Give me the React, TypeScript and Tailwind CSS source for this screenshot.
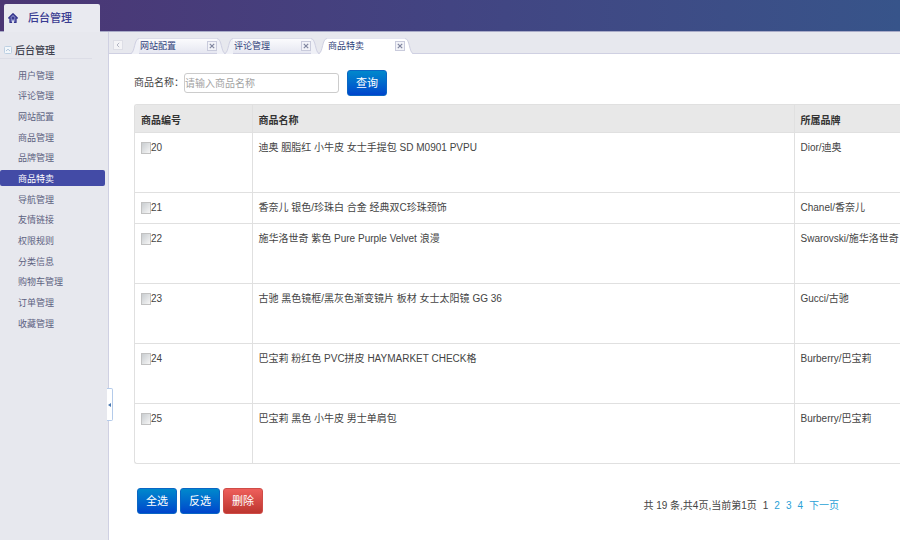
import { useState } from "react";

const menu = [
  "用户管理",
  "评论管理",
  "网站配置",
  "商品管理",
  "品牌管理",
  "商品特卖",
  "导航管理",
  "友情链接",
  "权限规则",
  "分类信息",
  "购物车管理",
  "订单管理",
  "收藏管理",
];

const tabs = ["网站配置", "评论管理", "商品特卖"];

const products = [
  { id: 20, name: "迪奥 胭脂红 小牛皮 女士手提包 SD M0901 PVPU", brand: "Dior/迪奥" },
  { id: 21, name: "香奈儿 银色/珍珠白 合金 经典双C珍珠颈饰", brand: "Chanel/香奈儿", short: true },
  { id: 22, name: "施华洛世奇 紫色 Pure Purple Velvet 浪漫", brand: "Swarovski/施华洛世奇" },
  { id: 23, name: "古驰 黑色镜框/黑灰色渐变镜片 板材 女士太阳镜 GG 36", brand: "Gucci/古驰" },
  { id: 24, name: "巴宝莉 粉红色 PVC拼皮 HAYMARKET CHECK格", brand: "Burberry/巴宝莉" },
  { id: 25, name: "巴宝莉 黑色 小牛皮 男士单肩包", brand: "Burberry/巴宝莉" },
];

const blueButton =
  "h-[26px] w-10 rounded-[3px] border border-[#0a66c4] bg-linear-to-b from-[#0088cc] to-[#0044cc] text-[11px] text-white";

function HomeIcon() {
  return (
    <svg viewBox="0 0 10 11" className="h-[11px] w-[10px]" fill="none">
      <path d="M5 0.8 9.3 5H8V9.4H2V5H0.7Z" fill="#7d80c2" stroke="#34348c" strokeWidth="1.3" strokeLinejoin="round" />
      <path d="M5 3.4 6.6 5.1 5 6.8 3.4 5.1Z" fill="#34348c" />
      <path d="M4.1 7.6H5.9V10.1H4.1Z" fill="#e9eaf2" />
    </svg>
  );
}

function Tab({ title, active, onSelect }: { title: string; active: boolean; onSelect: () => void }) {
  const edge = active ? "#ffffff" : "#f0f1f7";

  return (
    <div className={active ? "-mb-px flex h-4" : "flex h-[15px]"}>
      <svg viewBox="0 0 8 16" className="h-4 w-2 shrink-0">
        <path d="M0 16C4 14 3 1 8 0.5V16Z" fill={edge} />
        <path d="M0 15.5C4 14 3 1 8 0.5" fill="none" stroke="#cfd0e2" />
      </svg>
      <div
        className={
          active
            ? "flex h-4 w-[78px] items-center justify-between border-t border-[#e4e5f0] bg-white pb-px"
            : "flex h-[15px] w-[78px] items-center justify-between border-t border-[#dcdde9] bg-linear-to-b from-[#fbfbfd] to-[#e6e7f1]"
        }
      >
        <button type="button" onClick={onSelect} className="pl-px text-[9px] leading-[14px] text-[#2f3f7a]">
          {title}
        </button>
        <button
          type="button"
          aria-label={`关闭${title}`}
          className="flex h-[10px] w-[10px] items-center justify-center border border-[#c9cbdc] bg-[#f2f3f8]"
        >
          <svg viewBox="0 0 6 6" className="h-[6px] w-[6px]">
            <path d="M0.8 0.8 5.2 5.2M5.2 0.8 0.8 5.2" stroke="#80869f" strokeWidth="1.2" />
          </svg>
        </button>
      </div>
      <svg viewBox="0 0 8 16" className="h-4 w-2 shrink-0">
        <path d="M8 16C4 14 5 1 0 0.5V16Z" fill={edge} />
        <path d="M8 15.5C4 14 5 1 0 0.5" fill="none" stroke="#cfd0e2" />
      </svg>
    </div>
  );
}

export default function App() {
  const [activeTab, setActiveTab] = useState("商品特卖");
  const [selected, setSelected] = useState<number[]>([]);

  const toggle = (id: number) => {
    setSelected((prev) => (prev.includes(id) ? prev.filter((x) => x !== id) : [...prev, id]));
  };

  const selectAll = () => setSelected(products.map((p) => p.id));

  const invert = () => {
    setSelected((prev) => products.map((p) => p.id).filter((id) => !prev.includes(id)));
  };

  return (
    <div className="flex min-h-screen flex-col bg-white font-['Liberation_Sans','Noto_Sans_CJK_SC',sans-serif] text-[10px] text-[#444444]">
      <header className="flex h-8 items-end border-b border-[#a9abc8] bg-linear-to-r from-[#4b3674] via-[#424482] to-[#37548a] pl-1">
        <h1 className="-mb-px flex h-7 w-24 items-center gap-[10px] rounded-t-[2px] bg-[#e9eaf0] pl-1 text-[11px] font-medium text-[#3a3c92]">
          <HomeIcon />
          后台管理
        </h1>
      </header>

      <div className="flex flex-1">
        <aside className="relative w-[109px] shrink-0 border-r border-[#cfd0e2] bg-[#e7e8ee]">
          <h2 className="mr-4 flex h-[27px] items-center gap-[3px] border-b border-[#dcdde6] pt-[10px] pl-1 text-[10px] font-medium text-[#40424f]">
            <svg viewBox="0 0 8 8" className="h-2 w-2">
              <rect x="0.5" y="0.5" width="7" height="7" rx="1" fill="#f3f7fb" stroke="#bdd0e2" />
              <path d="M2 5 4 3.2 6 5" fill="none" stroke="#b0c6dc" />
            </svg>
            后台管理
          </h2>
          <ul className="mt-2 flex h-[264px] flex-col justify-between">
            {menu.map((item) => (
              <li key={item}>
                <a
                  href="#"
                  className={
                    item === "商品特卖"
                      ? "mr-[3px] flex h-4 items-center rounded-[2px] bg-[#434ba6] pt-[3px] pl-[18px] text-[9px] text-white"
                      : "mr-[3px] flex h-4 items-center pt-[3px] pl-[18px] text-[9px] text-[#5c6180]"
                  }
                >
                  {item}
                </a>
              </li>
            ))}
          </ul>
          {/* collapse handle sits over the sidebar edge */}
          <button
            type="button"
            aria-label="收起菜单"
            className="absolute top-[356px] left-full -ml-px flex h-[33px] w-[6px] items-center justify-center rounded-r-[2px] border border-l-0 border-[#b4cbea] bg-white"
          >
            <svg viewBox="0 0 3 4" className="h-1 w-[3px]">
              <path d="M3 0V4L0 2Z" fill="#4a78b0" />
            </svg>
          </button>
        </aside>

        <div className="min-w-0 flex-1">
          <nav className="flex h-[22px] items-end border-b border-[#cfd0e2] bg-[#e7e8ee] pl-1">
            <button
              type="button"
              aria-label="向左滚动"
              className="mr-2 mb-[3px] flex h-[10px] w-[10px] items-center justify-center border border-[#dddee6] bg-[#f4f4f7]"
            >
              <svg viewBox="0 0 4 6" className="h-[6px] w-1">
                <path d="M3.2 0.8 1 3 3.2 5.2" fill="none" stroke="#b3b6c4" />
              </svg>
            </button>
            {tabs.map((title) => (
              <Tab key={title} title={title} active={title === activeTab} onSelect={() => setActiveTab(title)} />
            ))}
          </nav>

          <main className="pt-4 pl-[25px]">
            <form className="flex h-[26px] items-center" onSubmit={(e) => e.preventDefault()}>
              <label htmlFor="goods-name" className="w-[50px] shrink-0 pb-[2px] whitespace-nowrap">
                商品名称：
              </label>
              <input
                id="goods-name"
                type="text"
                placeholder="请输入商品名称"
                className="h-5 w-[155px] rounded-[3px] border border-[#cccccc] text-[10px] placeholder:text-[#a3a3a3]"
              />
              <button type="submit" className={`${blueButton} ml-2`}>
                查询
              </button>
            </form>

            <div className="mt-2 overflow-hidden rounded-l-[3px] border border-r-0 border-[#e0e0e0]">
              <table className="w-full table-fixed border-collapse text-left">
                <thead>
                  <tr className="h-[27px] bg-[#e8e8e8] whitespace-nowrap text-[#333333]">
                    <th className="w-[117px] pt-1 pl-[6px] font-bold">商品编号</th>
                    <th className="border-l border-[#e0e0e0] pt-1 pl-[6px] font-bold">商品名称</th>
                    <th className="w-[106px] border-l border-[#e0e0e0] pt-1 pl-[6px] font-bold">所属品牌</th>
                  </tr>
                </thead>
                <tbody>
                  {products.map((p) => (
                    <tr
                      key={p.id}
                      className={
                        p.short
                          ? "h-[31px] border-t border-[#e0e0e0] align-top leading-4"
                          : "h-[60px] border-t border-[#e0e0e0] align-top leading-4"
                      }
                    >
                      <td className="pt-[7px] pl-[6px]">
                        <label className="flex items-center">
                          <input
                            type="checkbox"
                            checked={selected.includes(p.id)}
                            onChange={() => toggle(p.id)}
                            className="h-3 w-[10px] appearance-none border border-[#c2c2c2] bg-linear-to-br from-[#c9cdd0] to-[#f6f6f6] checked:from-[#2f66c4] checked:to-[#6d9be8]"
                          />
                          {p.id}
                        </label>
                      </td>
                      <td className="border-l border-[#e0e0e0] pt-[7px] pl-[6px]">{p.name}</td>
                      <td className="border-l border-[#e0e0e0] pt-[7px] pl-[6px] whitespace-nowrap">{p.brand}</td>
                    </tr>
                  ))}
                </tbody>
              </table>
            </div>

            <div className="mt-6 flex items-center justify-between pr-[61px] pl-[3px]">
              <div className="flex gap-[3px]">
                <button type="button" onClick={selectAll} className={blueButton}>
                  全选
                </button>
                <button type="button" onClick={invert} className={blueButton}>
                  反选
                </button>
                <button
                  type="button"
                  className="h-[26px] w-10 rounded-[3px] border border-[#cf4c47] bg-linear-to-b from-[#ee5f5b] to-[#bd362f] text-[11px] text-white"
                >
                  删除
                </button>
              </div>
              <div className="flex gap-[6px] pt-2">
                <span>共 19 条,共4页,当前第1页</span>
                <span>1</span>
                <a href="#" className="text-[#2a9fd6]">2</a>
                <a href="#" className="text-[#2a9fd6]">3</a>
                <a href="#" className="text-[#2a9fd6]">4</a>
                <a href="#" className="text-[#2a9fd6]">下一页</a>
              </div>
            </div>
          </main>
        </div>
      </div>
    </div>
  );
}
